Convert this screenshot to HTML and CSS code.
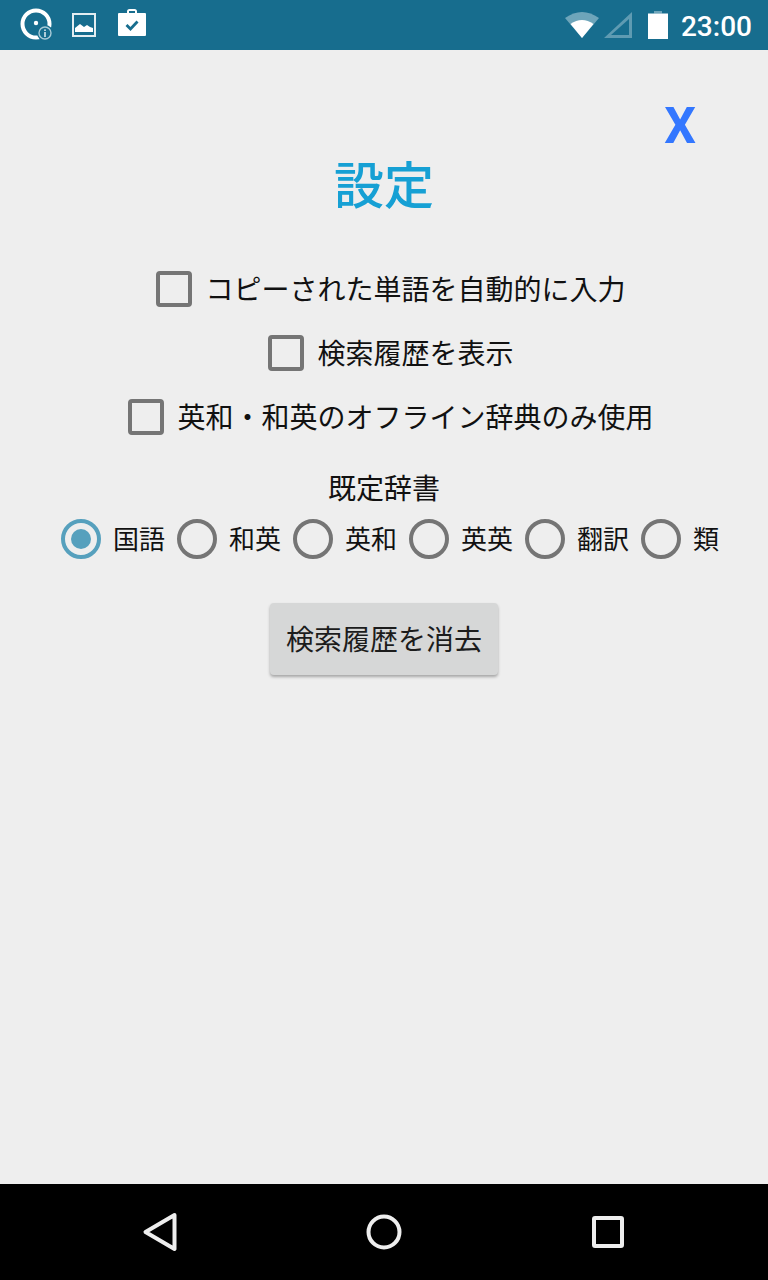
FILE: index.html
```html
<!DOCTYPE html>
<html lang="ja">
<head>
<meta charset="utf-8">
<title>設定</title>
<link rel="stylesheet" href="styles.css">
</head>
<body>
<div class="screen">
  <header class="status">
    <div class="status-left">
      <svg class="ic-disc" viewBox="0 0 36 36" width="36" height="36"><circle cx="17" cy="17" r="13.5" fill="none" stroke="#fff" stroke-width="4"/><circle cx="17" cy="16" r="2.2" fill="#fff"/><circle cx="26" cy="26" r="8" fill="#176d8e"/><circle cx="26" cy="26" r="6" fill="#176d8e" stroke="#a9cbd8" stroke-width="1.4"/><rect x="25.2" y="25" width="1.6" height="5" fill="#d5e5eb"/><rect x="25.2" y="22.4" width="1.6" height="1.6" fill="#d5e5eb"/></svg>
      <svg class="ic-image" viewBox="0 0 24 24" width="24" height="24"><rect x="1" y="1" width="22" height="22" fill="none" stroke="#e3edf1" stroke-width="2"/><path d="M3 19v-4l5-4 4 3 3-2 3 2 3 1v4z" fill="#fff"/></svg>
      <svg class="ic-work" viewBox="0 0 30 30" width="30" height="30"><path d="M10 5V3.500A2.500 2.500 0 0 1 12.500 1h5A2.500 2.500 0 0 1 20 3.500V5h8a1 1 0 0 1 1 1v21a1 1 0 0 1-1 1H2a1 1 0 0 1-1-1V6a1 1 0 0 1 1-1zm2 0h6V3h-6z" fill="#fff" fill-rule="evenodd"/><path d="M9.500 17l4 4 7-7.500" fill="none" stroke="#176d8e" stroke-width="2.800"/></svg>
    </div>
    <div class="status-right">
      <svg class="ic-wifi" viewBox="0 0 36 28" width="36" height="28"><path d="M18 27L1 7Q18-5 35 7z" fill="#6ea5ba"/><path d="M18 27L6.500 13Q18 5 29.500 13z" fill="#fff"/></svg>
      <svg class="ic-signal" viewBox="0 0 30 28" width="30" height="28"><path d="M30 1V27H2zM27 8L9 24h18z" fill="#5f9bb2" fill-rule="evenodd"/></svg>
      <svg class="ic-batt" viewBox="0 0 20 28" width="20" height="28"><path d="M6 0h8v2.500H6z" fill="#6ea5ba"/><path d="M0 2.500h20V28H0z" fill="#fff"/></svg>
      <span class="clock">23:00</span>
    </div>
  </header>

  <main class="content">
    <div class="close-row"><span class="close">X</span></div>
    <h1 class="title">設定</h1>
    <div class="checks">
      <label class="check"><span class="box"></span><span class="check-text">コピーされた単語を自動的に入力</span></label>
      <label class="check"><span class="box"></span><span class="check-text">検索履歴を表示</span></label>
      <label class="check"><span class="box"></span><span class="check-text">英和・和英のオフライン辞典のみ使用</span></label>
    </div>
    <div class="dict-label">既定辞書</div>
    <div class="radios">
      <div class="radio on"><span class="ring"></span><span class="radio-text">国語</span></div>
      <div class="radio"><span class="ring"></span><span class="radio-text">和英</span></div>
      <div class="radio"><span class="ring"></span><span class="radio-text">英和</span></div>
      <div class="radio"><span class="ring"></span><span class="radio-text">英英</span></div>
      <div class="radio"><span class="ring"></span><span class="radio-text">翻訳</span></div>
      <div class="radio"><span class="ring"></span><span class="radio-text">類</span></div>
    </div>
    <div class="button-row"><button class="clear">検索履歴を消去</button></div>
  </main>

  <nav class="navbar">
    <svg viewBox="0 0 36 40" width="36" height="40"><path d="M32.500 3L3.500 20l29 17z" fill="none" stroke="#eee" stroke-width="4" stroke-linejoin="round"/></svg>
    <svg class="nav-home" viewBox="0 0 36 36" width="36" height="36"><circle cx="18" cy="18" r="15.500" fill="none" stroke="#eee" stroke-width="4"/></svg>
    <svg viewBox="0 0 34 34" width="34" height="34"><rect x="3" y="3" width="28" height="28" rx="1" fill="none" stroke="#eee" stroke-width="4"/></svg>
  </nav>
</div>
</body>
</html>
```
FILE: styles.css
```css
* { box-sizing: border-box; }
html, body { margin: 0; padding: 0; }
body {
  font-family: "Noto Sans CJK JP", "Noto Sans", sans-serif;
  background: #eeeeee;
  color: #111;
}
.screen {
  width: 768px;
  height: 1280px;
  display: flex;
  flex-direction: column;
  overflow: hidden;
}
.status {
  height: 50px;
  flex: none;
  background: #176d8e;
  display: flex;
  justify-content: space-between;
  align-items: center;
  color: #fff;
}
.status-left {
  display: flex;
  align-items: center;
  padding-left: 19px;
}
.ic-image { margin-left: 17px; }
.ic-work { margin-left: 21px; margin-top: -4px; }
.status-right {
  display: flex;
  align-items: center;
  padding-right: 16px;
}
.ic-signal { margin-left: 2px; }
.ic-batt { margin-left: 16px; }
.clock {
  font-family: Roboto, sans-serif;
  font-weight: 500;
  font-size: 28px;
  margin-left: 13px;
  line-height: 50px;
  padding-top: 3px;
}
.content {
  flex: 1;
  display: flex;
  flex-direction: column;
}
.close-row {
  display: flex;
  justify-content: flex-end;
  padding: 49px 72px 0 0;
  height: 99px;
}
.close {
  font-family: Roboto, sans-serif;
  font-weight: 700;
  font-size: 50px;
  line-height: 54px;
  color: #3377ff;
}
.title {
  margin: 0;
  text-align: center;
  font-size: 50px;
  font-weight: 500;
  line-height: 66px;
  color: #16a0d4;
}
.checks {
  display: flex;
  flex-direction: column;
  align-items: center;
  gap: 24px;
  margin-top: 54px;
  padding-left: 14px;
}
.check {
  display: flex;
  align-items: center;
  gap: 13px;
  height: 40px;
  font-size: 28px;
  line-height: 40px;
  color: #111;
}
.check-text { padding-bottom: 2px; }
.box {
  width: 36px;
  height: 36px;
  border: 4px solid #757575;
  border-radius: 4px;
}
.dict-label {
  margin-top: 30px;
  text-align: center;
  font-size: 28px;
  line-height: 40px;
}
.radios {
  display: flex;
  justify-content: flex-start;
  padding-left: 61px;
  margin-top: 12px;
}
.radio {
  width: 116px;
  display: flex;
  align-items: center;
  gap: 12px;
  height: 40px;
}
.ring {
  width: 40px;
  height: 40px;
  flex: none;
  border-radius: 50%;
  border: 4px solid #757575;
  display: flex;
  align-items: center;
  justify-content: center;
}
.on .ring { border-color: #56a0bd; }
.on .ring::after {
  content: "";
  width: 20px;
  height: 20px;
  border-radius: 50%;
  background: #56a0bd;
}
.radio-text {
  font-size: 26px;
  line-height: 40px;
  white-space: nowrap;
  padding-bottom: 2px;
}
.button-row {
  display: flex;
  justify-content: center;
  margin-top: 44px;
}
.clear {
  width: 228px;
  height: 72px;
  padding: 0 0 2px;
  border: none;
  border-radius: 4px;
  background: #d6d7d7;
  color: #1c1c1c;
  font-family: inherit;
  font-size: 28px;
  box-shadow: 0 2px 3px rgba(0, 0, 0, 0.3);
}
.navbar {
  height: 96px;
  flex: none;
  background: #000;
  display: flex;
  align-items: center;
  justify-content: space-between;
  padding: 0 143px 0 142px;
}
.nav-home { margin-left: -2px; }
```
